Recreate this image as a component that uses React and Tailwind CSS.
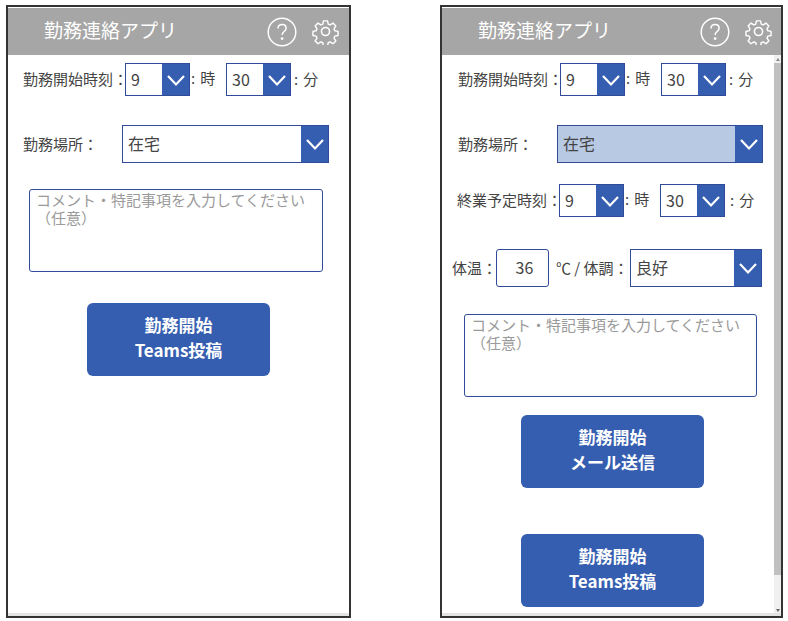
import React from 'react';

const Chevron = ({ size = 20 }) => (
    <svg width={size} height={size} viewBox="0 0 20 20" fill="none" stroke="#fff" strokeWidth="2.2">
        <path d="M2 6l8 8.5L18 6" />
    </svg>
);

const Dropdown = ({ value, className, arrow = 'w-[27px]', bg = 'bg-white' }) => (
    <div className={`flex shrink-0 border border-[#2f4b9a] ${bg} ${className}`}>
        <div className="flex-1 flex items-center pl-[5px] pb-[2px] text-[16px] text-[#444]">{value}</div>
        <div className={`flex items-center justify-center bg-[#355eb0] ${arrow}`}>
            <Chevron />
        </div>
    </div>
);

const TimeRow = ({ label, className, labelClass, minuteGap = 'ml-[3px]' }) => (
    <div className={`flex items-center text-[15px] text-[#444] ${className}`}>
        <span className={`shrink-0 whitespace-nowrap ${labelClass}`}>{label}</span>
        <Dropdown value="9" className="w-[65px] h-[33px]" />
        <span className="w-[36px] pl-[1px] pb-[3px] flex gap-[5px] whitespace-nowrap">
            <span>:</span>
            <span>時</span>
        </span>
        <Dropdown value="30" className="w-[65px] h-[33px]" />
        <span className={`flex gap-[5px] whitespace-nowrap pb-[1px] ${minuteGap}`}>
            <span>:</span>
            <span>分</span>
        </span>
    </div>
);

const Comment = ({ className }) => (
    <div className={`border border-[#2f4b9a] rounded-[3px] h-[83px] pl-[6px] pt-[1px] text-[15px] leading-[18px] text-[#9a9a9a] whitespace-nowrap ${className}`}>
        <div>コメント・特記事項を入力してください</div>
        <div>（任意）</div>
    </div>
);

const PostButton = ({ line2, className }) => (
    <div className={`w-[183px] h-[73px] rounded-[6px] bg-[#355eb0] flex flex-col items-center justify-center gap-[4px] pb-[5px] text-white text-[17px] font-bold leading-[21px] ${className}`}>
        <div>勤務開始</div>
        <div>{line2}</div>
    </div>
);

const Header = ({ iconEnd = 'mr-[10px]' }) => (
    <div className="h-[47px] bg-[#a6a6a6] flex items-center shrink-0">
        <div className="ml-[36px] text-[19px] text-white flex-1 pb-[2px]">勤務連絡アプリ</div>
        <svg width="30" height="30" viewBox="0 0 30 30" fill="none" stroke="#fff" strokeWidth="1.5" className="mr-[15px]">
            <circle cx="15" cy="15" r="13.8" />
            <path d="M11 11.5c0-2.4 1.8-4 4.1-4s4 1.6 4 3.7c0 3.4-4 3.3-4 6.8" />
            <circle cx="15.1" cy="21.6" r="0.7" fill="#fff" />
        </svg>
        <svg width="27" height="27" viewBox="0 0 24 24" fill="none" stroke="#fff" strokeWidth="1.4" strokeLinejoin="round" className={iconEnd}>
            <path d="M10 1.5h4l.7 3.2 1.9.8 2.8-1.8 2.8 2.8-1.8 2.8.8 1.9 3.2.7v4l-3.2.7-.8 1.9 1.8 2.8-2.8 2.8-2.8-1.8-1.9.8-.7 3.2h-4l-.7-3.2-1.9-.8-2.8 1.8-2.8-2.8 1.8-2.8-.8-1.9-3.2-.7v-4l3.2-.7.8-1.9-1.8-2.8 2.8-2.8 2.8 1.8 1.9-.8z" transform="translate(1.2 1.2) scale(0.9)" />
            <circle cx="12" cy="12" r="3.6" />
        </svg>
    </div>
);

const App = () => {
    return (
        <div className="w-[788px] h-[621px] bg-white flex items-start pl-[6px] pt-[5px] font-['Noto_Sans_CJK_JP','Noto_Sans',sans-serif]">
            {/* left: before */}
            <div className="w-[345px] h-[613px] border-2 border-[#333] pt-[1px] flex flex-col">
                <Header />
                <div className="flex-1 flex flex-col">
                    <TimeRow label="勤務開始時刻：" className="mt-[8px]" labelClass="ml-[15px] w-[102px]" />
                    <div className="flex items-center mt-[29px] text-[15px] text-[#444]">
                        <span className="ml-[15px] w-[99px]">勤務場所：</span>
                        <Dropdown value="在宅" className="w-[207px] h-[38px]" />
                    </div>
                    <Comment className="ml-[21px] mt-[26px] w-[294px]" />
                    <PostButton line2="Teams投稿" className="ml-[79px] mt-[31px]" />
                </div>
                <div className="h-[3px] bg-[#e4e4e4]" />
            </div>

            {/* right: after */}
            <div className="w-[343px] h-[613px] ml-[89px] border-2 border-[#333] pt-[1px] flex flex-col">
                <Header iconEnd="mr-[9px]" />
                <div className="flex-1 flex min-h-0">
                    <div className="w-[332px] pl-[1px] flex flex-col">
                        <TimeRow label="勤務開始時刻：" className="mt-[8px]" labelClass="ml-[15px] w-[102px]" />
                        <div className="flex items-center mt-[29px] text-[15px] text-[#444]">
                            <span className="ml-[15px] w-[99px]">勤務場所：</span>
                            <Dropdown value="在宅" className="w-[206px] h-[38px]" bg="bg-[#b8c9e3]" />
                        </div>
                        <TimeRow label="終業予定時刻：" className="mt-[21px]" labelClass="ml-[14px] w-[102px]" minuteGap="ml-[5px]" />
                        <div className="flex items-center mt-[32px] text-[15px] text-[#444]">
                            <span className="ml-[9px] w-[44px] whitespace-nowrap">体温：</span>
                            <div className="w-[53px] h-[38px] border border-[#2f4b9a] rounded-[3px] flex items-center justify-center pl-[4px] pb-[2px] text-[16px] shrink-0">36</div>
                            <span className="w-[81px] pl-[7px] whitespace-nowrap">℃ / 体調：</span>
                            <Dropdown value="良好" className="w-[132px] h-[38px]" />
                        </div>
                        <Comment className="ml-[21px] mt-[27px] w-[293px]" />
                        <PostButton line2="メール送信" className="ml-[78px] mt-[18px]" />
                        <PostButton line2="Teams投稿" className="ml-[78px] mt-[46px]" />
                    </div>
                    {/* scrollbar */}
                    <div className="w-[7px] bg-[#f0f0f0] flex flex-col items-center">
                        <div className="h-[8px] flex items-center justify-center">
                            <div className="border-x-[2px] border-b-[3px] border-x-transparent border-b-[#888]" />
                        </div>
                        <div className="w-full h-[512px] bg-[#c0c0c0]" />
                        <div className="flex-1" />
                        <div className="h-[6px] flex items-center justify-center">
                            <div className="border-x-[2px] border-t-[3px] border-x-transparent border-t-[#666]" />
                        </div>
                    </div>
                </div>
                <div className="h-[3px] bg-[#e4e4e4]" />
            </div>
        </div>
    );
};

export default App;
